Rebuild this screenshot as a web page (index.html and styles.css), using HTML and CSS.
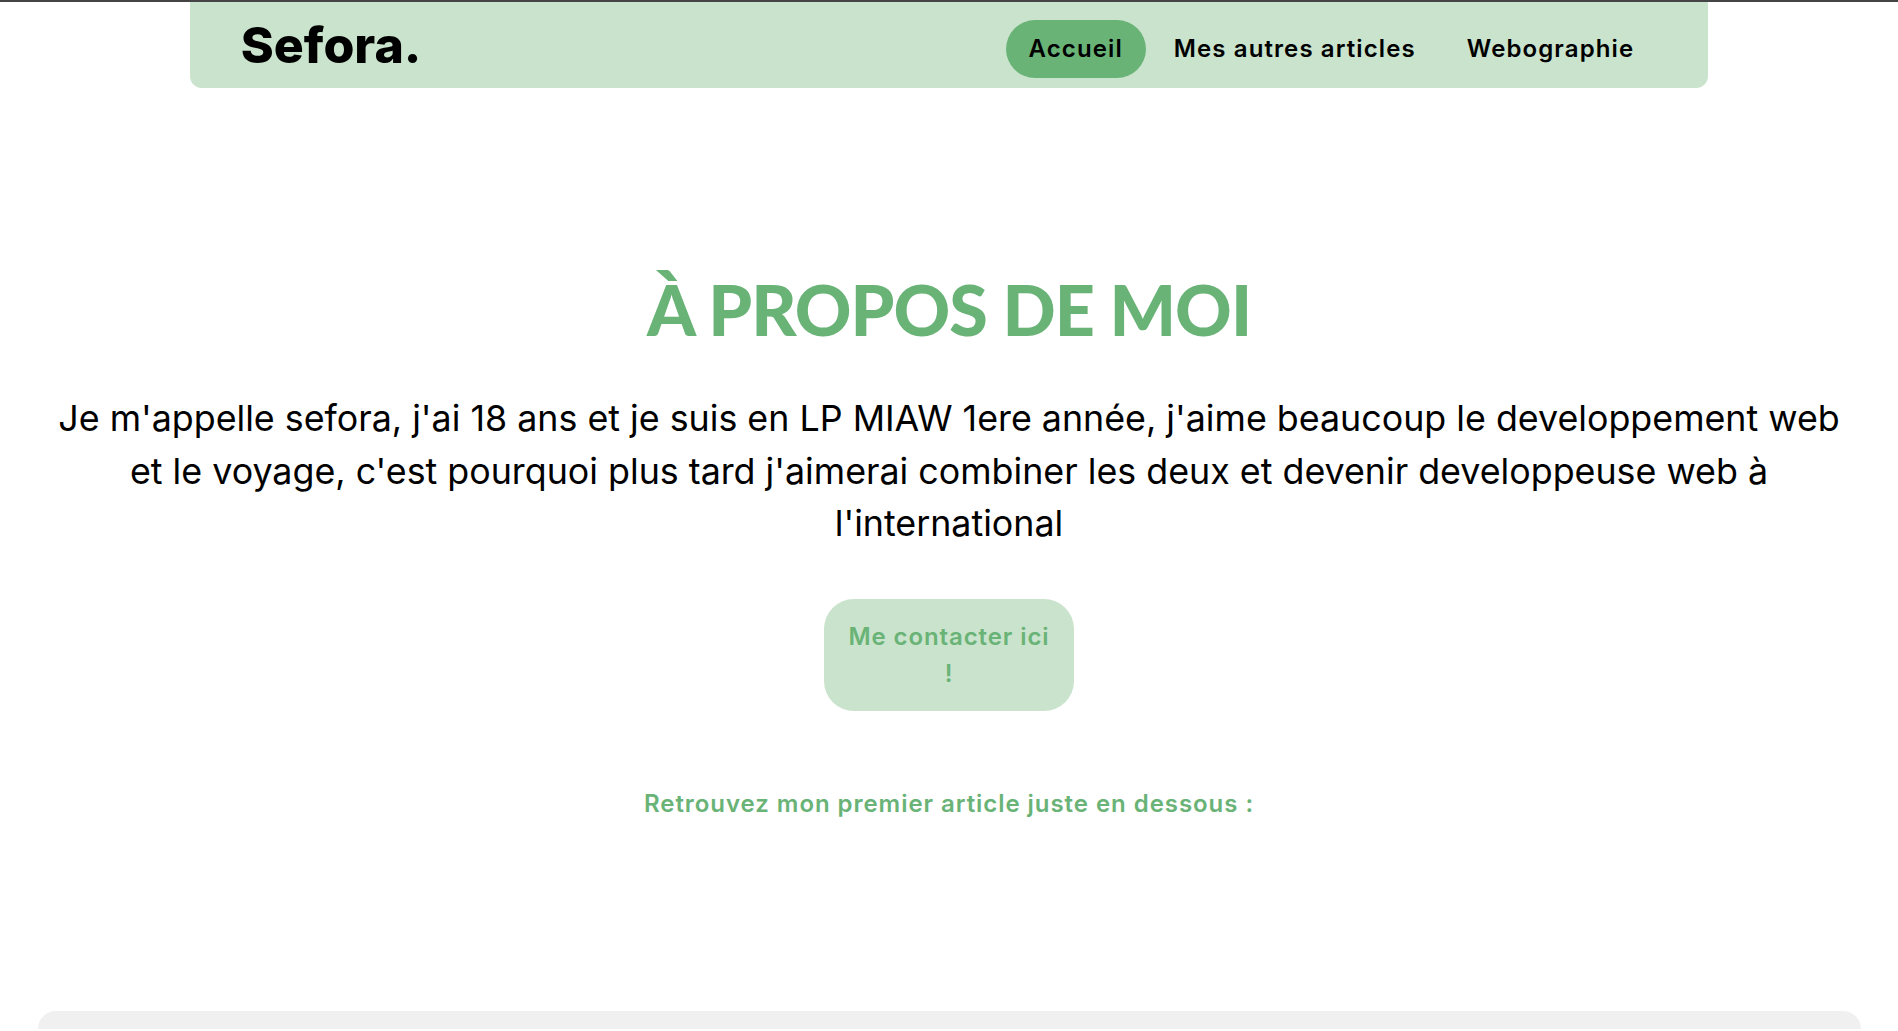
FILE: index.html
```html
<!DOCTYPE html>
<html lang="fr">
<head>
<meta charset="utf-8">
<title>Sefora</title>
<link rel="stylesheet" href="styles.css">
</head>
<body>
<div class="topline"></div>
<header class="header">
  <div class="logo">Sefora.</div>
  <nav class="nav">
    <a class="nav-link active" href="#">Accueil</a>
    <a class="nav-link" href="#">Mes autres articles</a>
    <a class="nav-link" href="#">Webographie</a>
  </nav>
</header>
<main class="main">
  <h1 class="title">À PROPOS DE MOI</h1>
  <p class="intro">Je m'appelle sefora, j'ai 18 ans et je suis en LP MIAW 1ere année, j'aime beaucoup le developpement web et le voyage, c'est pourquoi plus tard j'aimerai combiner les deux et devenir developpeuse web à l'international</p>
  <a class="contact" href="#">Me contacter ici !</a>
  <p class="next">Retrouvez mon premier article juste en dessous :</p>
</main>
<section class="article"></section>
</body>
</html>
```

FILE: styles.css
```css
html, body {
  margin: 0;
  padding: 0;
  background: #ffffff;
}
body {
  font-family: "Inter", "Liberation Sans", sans-serif;
  overflow: hidden;
  height: 1031px;
}
.topline {
  height: 2px;
  background: #444444;
}
.header {
  width: 80%;
  margin: 0 auto;
  height: 86px;
  box-sizing: border-box;
  padding: 0 51px;
  background: #cae3cc;
  border-radius: 0 0 12px 12px;
  display: flex;
  align-items: center;
  justify-content: space-between;
}
.logo {
  font-family: "Inter", sans-serif;
  font-weight: 800;
  font-size: 50px;
  letter-spacing: 0;
  color: #000;
}
.nav {
  display: flex;
  align-items: center;
  gap: 5px;
  margin-top: 8px;
}
.nav-link {
  font-family: "Inter", sans-serif;
  font-weight: 600;
  font-size: 24px;
  letter-spacing: 1.1px;
  line-height: 34px;
  color: #000;
  text-decoration: none;
  padding: 12px 23px;
  border-radius: 29px;
}
.nav-link.active {
  background: #69b377;
}
.main {
  text-align: center;
}
.title {
  margin: 179px 0 0;
  font-family: "Lato", sans-serif;
  font-weight: 900;
  font-size: 70px;
  letter-spacing: -1px;
  line-height: 84px;
  color: #69b377;
}
.intro {
  margin: 41px auto 0;
  padding: 0 54px;
  font-size: 35.8px;
  line-height: 52.5px;
  font-weight: 400;
  color: #000;
}
.contact {
  display: inline-block;
  margin-top: 49px;
  width: 250px;
  box-sizing: border-box;
  padding: 19px 20px;
  background: #cae3cc;
  border-radius: 30px;
  color: #69b377;
  font-weight: 600;
  font-size: 24px;
  letter-spacing: 0.9px;
  line-height: 37px;
  text-decoration: none;
}
.next {
  margin: 76px 0 0;
  color: #69b377;
  font-weight: 600;
  font-size: 24px;
  letter-spacing: 0.95px;
  line-height: 33px;
}
.article {
  width: 1823px;
  margin: 191px auto 0;
  height: 18px;
  background: #f0f0f0;
  border-radius: 22px 22px 0 0;
}
```
